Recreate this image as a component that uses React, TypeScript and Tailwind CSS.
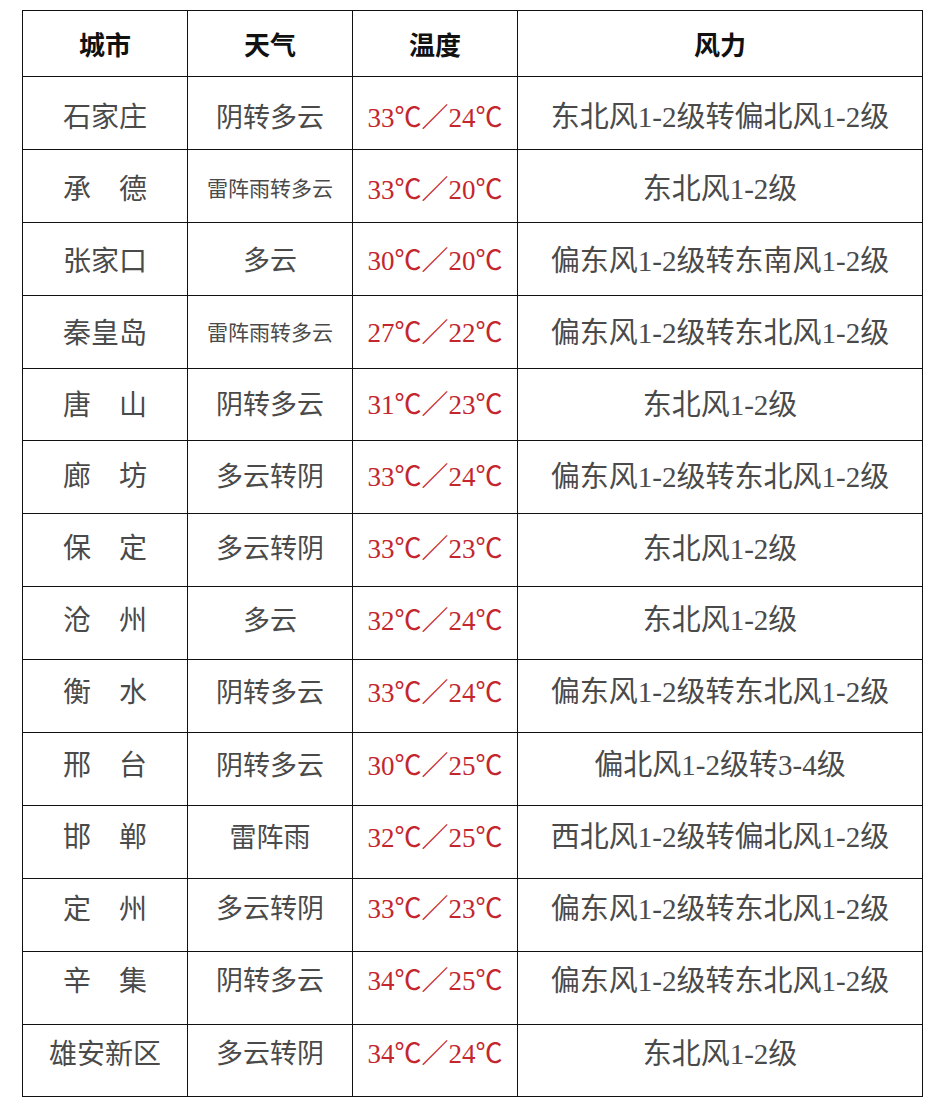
const rows = [
  { city: "石家庄", weather: "阴转多云", temp: "33℃／24℃", wind: "东北风1-2级转偏北风1-2级", pad: "pt-[10px]" },
  { city: "承\u3000德", weather: "雷阵雨转多云", temp: "33℃／20℃", wind: "东北风1-2级", small: true, pad: "pt-[8px]" },
  { city: "张家口", weather: "多云", temp: "30℃／20℃", wind: "偏东风1-2级转东南风1-2级", pad: "pt-[6px]" },
  { city: "秦皇岛", weather: "雷阵雨转多云", temp: "27℃／22℃", wind: "偏东风1-2级转东北风1-2级", small: true, pad: "pt-[4px]" },
  { city: "唐\u3000山", weather: "阴转多云", temp: "31℃／23℃", wind: "东北风1-2级", pad: "pt-[2px]" },
  { city: "廊\u3000坊", weather: "多云转阴", temp: "33℃／24℃", wind: "偏东风1-2级转东北风1-2级", pad: "" },
  { city: "保\u3000定", weather: "多云转阴", temp: "33℃／23℃", wind: "东北风1-2级", pad: "pb-[2px]" },
  { city: "沧\u3000州", weather: "多云", temp: "32℃／24℃", wind: "东北风1-2级", pad: "pb-[4px]" },
  { city: "衡\u3000水", weather: "阴转多云", temp: "33℃／24℃", wind: "偏东风1-2级转东北风1-2级", pad: "pb-[6px]" },
  { city: "邢\u3000台", weather: "阴转多云", temp: "30℃／25℃", wind: "偏北风1-2级转3-4级", pad: "pb-[6px]" },
  { city: "邯\u3000郸", weather: "雷阵雨", temp: "32℃／25℃", wind: "西北风1-2级转偏北风1-2级", pad: "pb-[8px]" },
  { city: "定\u3000州", weather: "多云转阴", temp: "33℃／23℃", wind: "偏东风1-2级转东北风1-2级", pad: "pb-[10px]" },
  { city: "辛\u3000集", weather: "阴转多云", temp: "34℃／25℃", wind: "偏东风1-2级转东北风1-2级", pad: "pb-[12px]" },
  { city: "雄安新区", weather: "多云转阴", temp: "34℃／24℃", wind: "东北风1-2级", pad: "pb-[12px]" },
];

const font = "[font-family:'Liberation_Serif','Noto_Sans_CJK_SC',serif]";
const cell = "border-[1.5px] border-[#111] text-center align-middle";

export default function App() {
  return (
    <div className={`min-h-[1104px] w-[942px] bg-white pl-[22px] pt-[10px] ${font}`}>
      <table className="w-[900px] table-fixed border-collapse">
        <colgroup>
          <col className="w-[165px]" />
          <col className="w-[165px]" />
          <col className="w-[165px]" />
          <col className="w-[405px]" />
        </colgroup>
        <thead>
          <tr className="h-[66px]">
            {["城市", "天气", "温度", "风力"].map((h) => (
              <th key={h} className={`${cell} pt-[6px] text-[26px] font-semibold text-[#111]`}>
                {h}
              </th>
            ))}
          </tr>
        </thead>
        <tbody>
          {rows.map((r) => (
            <tr key={r.city} className="h-[72.9px]">
              <td className={`${cell} ${r.pad} text-[28px] text-[#4a4a4a]`}>{r.city}</td>
              <td className={`${cell} ${r.pad} text-[#4a4a4a] ${r.small ? "text-[21px]" : "text-[27px]"}`}>
                {r.weather}
              </td>
              <td className={`${cell} ${r.pad} text-[27px] text-[#c4262e]`}>{r.temp}</td>
              <td className={`${cell} ${r.pad} text-[29px] text-[#4a4a4a]`}>{r.wind}</td>
            </tr>
          ))}
        </tbody>
      </table>
    </div>
  );
}
